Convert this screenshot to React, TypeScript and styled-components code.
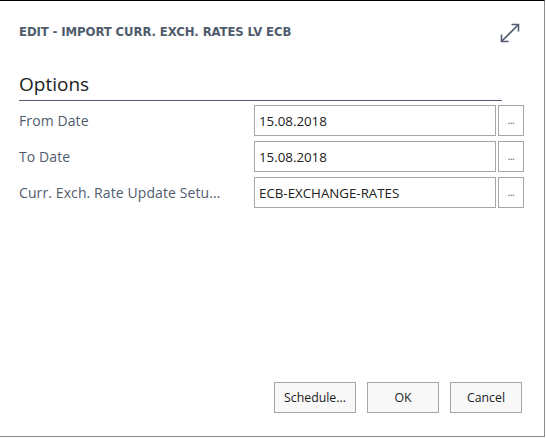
import React from 'react';
import styled, { createGlobalStyle } from 'styled-components';

const GlobalStyle = createGlobalStyle`
  html, body {
    margin: 0;
    padding: 0;
    background: #ffffff;
  }
  body {
    font-family: 'Open Sans', 'Noto Sans', Arial, sans-serif;
  }
`;

const Dialog = styled.div`
  box-sizing: border-box;
  width: 545px;
  height: 437px;
  border-top: 1px solid #000000;
  border-right: 1px solid #8a8a8a;
  border-bottom: 1px solid #8a8a8a;
  background: #ffffff;
  display: flex;
  flex-direction: column;
  padding: 0 22px 23px 19px;
`;

const Header = styled.div`
  display: flex;
  align-items: center;
  justify-content: space-between;
  height: 60px;
`;

const Title = styled.h1`
  margin: 0;
  font-family: 'DejaVu Sans Condensed', 'DejaVu Sans', sans-serif;
  font-stretch: condensed;
  font-weight: bold;
  font-size: 13px;
  color: #505c6d;
  letter-spacing: -0.1px;
`;

const ExpandButton = styled.div`
  width: 24px;
  height: 24px;
  margin-top: 4px;
  color: #505c6d;
`;

const SectionTitle = styled.h2`
  margin: 11px 20px 0 0;
  padding-bottom: 4px;
  font-weight: normal;
  font-size: 19px;
  color: #212121;
  border-bottom: 1px solid #505c6d;
  line-height: 24px;
`;

const Fields = styled.div`
  display: flex;
  flex-direction: column;
  gap: 5px;
  margin-top: 4px;
`;

const Row = styled.div`
  display: grid;
  grid-template-columns: 233px 242px 26px;
  column-gap: 2px;
  align-items: center;
  height: 31px;
`;

const Label = styled.label`
  font-size: 14px;
  letter-spacing: 0.1px;
  color: #505c6d;
  white-space: nowrap;
`;

const Input = styled.div`
  box-sizing: border-box;
  height: 31px;
  border: 1px solid #a6a6a6;
  padding: 0 4px;
  display: flex;
  align-items: center;
  font-size: 13.3px;
  color: #212121;
`;

const LookupButton = styled.div`
  box-sizing: border-box;
  height: 31px;
  border: 1px solid #a6a6a6;
  display: flex;
  align-items: flex-end;
  justify-content: center;
  padding-bottom: 8px;
  font-size: 10px;
  color: #505c6d;
  letter-spacing: -0.5px;
`;

const Footer = styled.div`
  margin-top: auto;
  display: flex;
  justify-content: flex-end;
  gap: 11px;
`;

const ActionButton = styled.button<{ $width: number }>`
  box-sizing: border-box;
  width: ${(p) => p.$width}px;
  height: 31px;
  border: 1px solid #a6a6a6;
  background: #f8f8f8;
  font-family: 'Open Sans', 'Noto Sans', Arial, sans-serif;
  font-size: 12.3px;
  color: #212121;
  padding: 0;
`;

const fields = [
  { label: 'From Date', value: '15.08.2018' },
  { label: 'To Date', value: '15.08.2018' },
  { label: 'Curr. Exch. Rate Update Setu...', value: 'ECB-EXCHANGE-RATES' },
];

const App: React.FC = () => {
  return (
    <>
      <GlobalStyle />
      <Dialog>
        <Header>
          <Title>EDIT - IMPORT CURR. EXCH. RATES LV ECB</Title>
          <ExpandButton>
            <svg width="24" height="24" viewBox="0 0 24 24" fill="none" stroke="currentColor" strokeWidth="1.6">
              <path d="M3.5 20.5 L20.5 3.5" />
              <path d="M13.5 3.5 H20.5 V10.5" />
              <path d="M3.5 13.5 V20.5 H10.5" />
            </svg>
          </ExpandButton>
        </Header>
        <SectionTitle>Options</SectionTitle>
        <Fields>
          {fields.map((f) => (
            <Row key={f.label}>
              <Label>{f.label}</Label>
              <Input>{f.value}</Input>
              <LookupButton>...</LookupButton>
            </Row>
          ))}
        </Fields>
        <Footer>
          <ActionButton $width={82}>Schedule...</ActionButton>
          <ActionButton $width={72}>OK</ActionButton>
          <ActionButton $width={72}>Cancel</ActionButton>
        </Footer>
      </Dialog>
    </>
  );
};

export default App;
